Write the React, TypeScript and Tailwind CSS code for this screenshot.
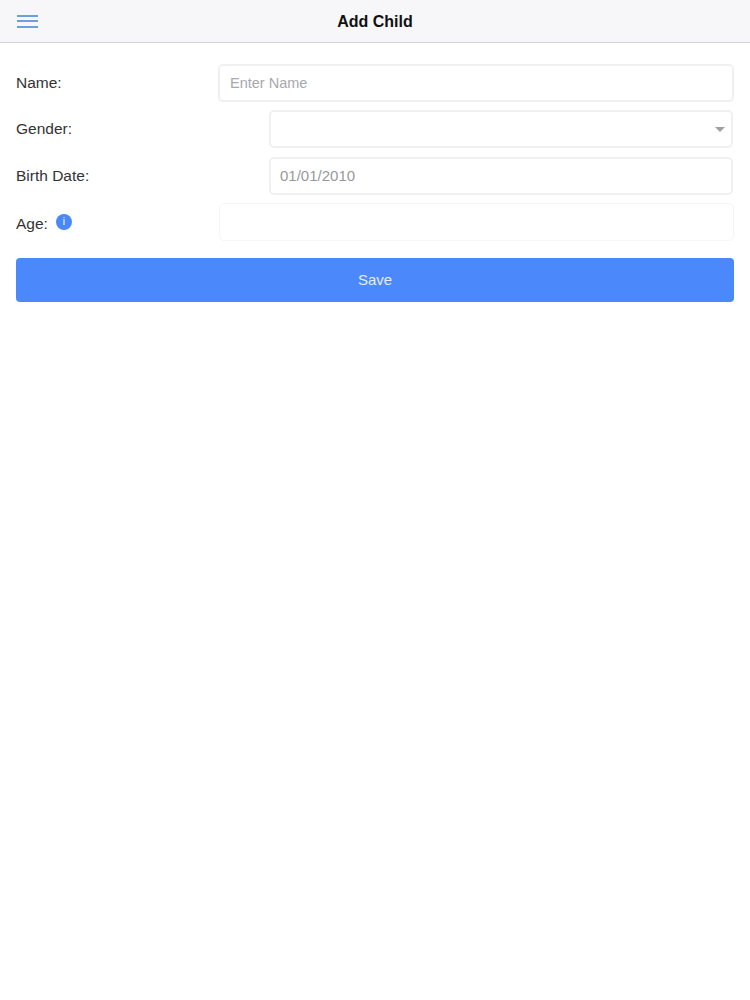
import { ReactNode } from 'react'

function Row({ label, labelWidth, children, className }: { label: ReactNode; labelWidth: string; children: ReactNode; className: string }) {
  return (
    <div className={`flex items-center ${className}`}>
      <div className={`shrink-0 flex items-center text-[15.5px] text-[#333335] ${labelWidth}`}>{label}</div>
      {children}
    </div>
  )
}

export default function App() {
  return (
    <div className="min-h-[1000px] bg-white font-['Liberation_Sans',Arial,sans-serif]">
      {/* Header */}
      <header className="relative h-[43px] flex items-center justify-center pt-[2px] bg-[#f7f7f9] border-b border-[#d4d4d6]">
        <button className="absolute left-[17px] top-[14.5px] w-[21px] flex flex-col gap-[3.7px]" aria-label="Menu">
          <span className="block h-[2px] bg-[#6d9fd8]"></span>
          <span className="block h-[2px] bg-[#6d9fd8]"></span>
          <span className="block h-[2px] bg-[#6d9fd8]"></span>
        </button>
        <h1 className="text-base font-bold text-[#111111]">Add Child</h1>
      </header>

      {/* Form */}
      <div className="pl-4 pr-4 pt-[21px]">
        <Row label="Name:" labelWidth="w-[202px]" className="h-[38px]">
          <div className="flex-1 h-full flex items-center pt-[2px] px-[10px] bg-white rounded-[5px] border-2 border-[#f0f0f2] text-[14.5px] text-[#a8a8ac]">
            Enter Name
          </div>
        </Row>
        <Row label="Gender:" labelWidth="w-[253px]" className="h-[38px] mt-2 mr-px">
          <div className="flex-1 h-full flex items-center justify-end pr-[6px] bg-white rounded-[5px] border-2 border-[#f0f0f2]">
            <div className="w-0 h-0 border-x-[5px] border-x-transparent border-t-[5px] border-t-[#a0a0a4]"></div>
          </div>
        </Row>
        <Row label="Birth Date:" labelWidth="w-[253px]" className="h-[38px] mt-[9px] mr-px">
          <div className="flex-1 h-full flex items-center px-[9px] bg-white rounded-[5px] border-2 border-[#f0f0f2] text-[15px] text-[#98989c]">
            01/01/2010
          </div>
        </Row>
        <Row
          label={
            <>
              <span className="mt-[3px]">Age:</span>
              <span className="ml-2 -mt-[1px] w-4 h-4 rounded-full bg-[#4a88f5] text-white text-[10px] leading-none flex items-center justify-center">i</span>
            </>
          }
          labelWidth="w-[203px]"
          className="h-[38px] mt-2"
        >
          <div className="flex-1 h-full bg-white rounded-[5px] border border-[#f6f6f8]"></div>
        </Row>
        <button className="mt-[17px] w-full h-[44px] rounded-[4px] bg-[#4a88fb] text-[15px] text-[#e4edfd]">Save</button>
      </div>
    </div>
  )
}
